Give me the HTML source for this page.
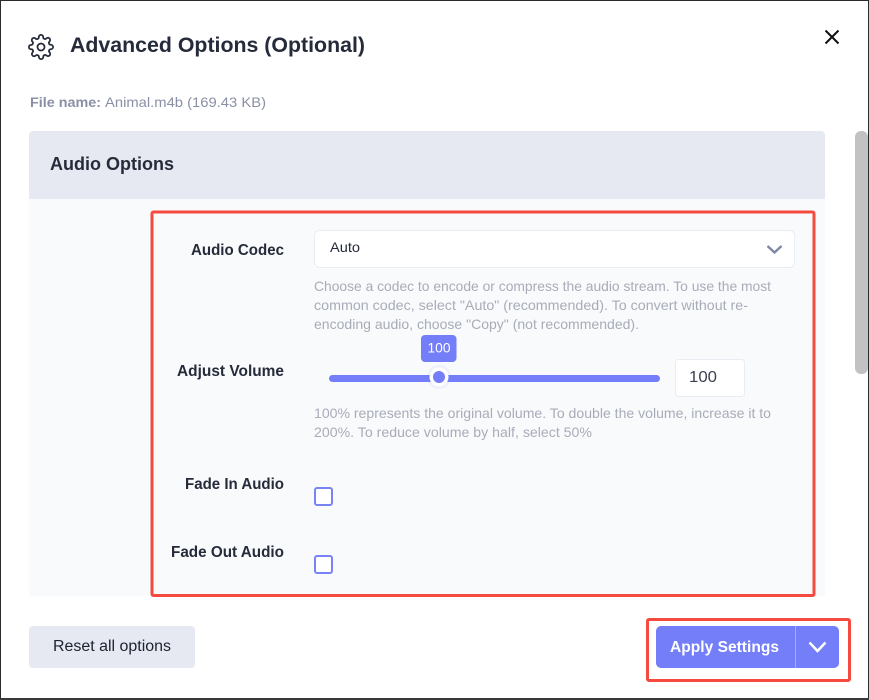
<!DOCTYPE html>
<html lang="en">
<head>
<meta charset="utf-8">
<title>Advanced Options</title>
<style>
html,body{margin:0;padding:0;width:869px;height:700px;overflow:hidden;background:#fff}
svg{display:block;position:absolute;left:0;top:0}
text{font-family:"Liberation Sans",sans-serif;white-space:pre}
.b{font-weight:700}
.lab{font-size:15.5px;font-weight:700;fill:#252b3a}
.help{font-size:14px;fill:#a8acb8}
</style>
</head>
<body>
<svg width="869" height="700" viewBox="0 0 869 700" xmlns="http://www.w3.org/2000/svg">
  <rect x="0" y="0" width="869" height="700" fill="#fff"/>
  <!-- window edges -->
  <rect x="0" y="0" width="869" height="1" fill="#2b2b2b"/>
  <rect x="0" y="0" width="1" height="700" fill="#2b2b2b"/>
  <rect x="868" y="0" width="1" height="700" fill="#2b2b2b"/>
  <rect x="0" y="698" width="869" height="2" fill="#3a3a3a"/>

  <!-- gear -->
  <g transform="translate(27.8 33.8) scale(1.1)" fill="none" stroke="#252b3a" stroke-width="1.6" stroke-linecap="round" stroke-linejoin="round">
    <circle cx="12" cy="12" r="3.2"/>
    <path d="M19.4 15a1.65 1.65 0 0 0 .33 1.82l.06.06a2 2 0 0 1 0 2.83 2 2 0 0 1-2.83 0l-.06-.06a1.65 1.65 0 0 0-1.82-.33 1.65 1.65 0 0 0-1 1.51V21a2 2 0 0 1-2 2 2 2 0 0 1-2-2v-.09A1.65 1.65 0 0 0 9 19.4a1.65 1.65 0 0 0-1.82.33l-.06.06a2 2 0 0 1-2.83 0 2 2 0 0 1 0-2.83l.06-.06a1.65 1.65 0 0 0 .33-1.82 1.65 1.65 0 0 0-1.51-1H3a2 2 0 0 1-2-2 2 2 0 0 1 2-2h.09A1.65 1.65 0 0 0 4.6 9a1.65 1.65 0 0 0-.33-1.82l-.06-.06a2 2 0 0 1 0-2.83 2 2 0 0 1 2.83 0l.06.06a1.65 1.65 0 0 0 1.82.33H9a1.65 1.65 0 0 0 1-1.51V3a2 2 0 0 1 2-2 2 2 0 0 1 2 2v.09a1.65 1.65 0 0 0 1 1.51 1.65 1.65 0 0 0 1.82-.33l.06-.06a2 2 0 0 1 2.83 0 2 2 0 0 1 0 2.83l-.06.06a1.65 1.65 0 0 0-.33 1.82V9a1.65 1.65 0 0 0 1.51 1H21a2 2 0 0 1 2 2 2 2 0 0 1-2 2h-.09a1.65 1.65 0 0 0-1.51 1z"/>
  </g>
  <text x="70" y="52" class="b" font-size="21" fill="#252b3a" textLength="295" lengthAdjust="spacingAndGlyphs">Advanced Options (Optional)</text>

  <!-- close -->
  <path d="M825.5 30.5L838.5 43.5M838.5 30.5L825.5 43.5" stroke="#111" stroke-width="2" fill="none"/>

  <text x="30" y="107" class="b" font-size="14" fill="#8a90a5" textLength="71" lengthAdjust="spacingAndGlyphs">File name:</text>
  <text x="105" y="107" font-size="14" fill="#8a90a5" textLength="161" lengthAdjust="spacingAndGlyphs">Animal.m4b (169.43 KB)</text>

  <!-- panel -->
  <rect x="29" y="199" width="796" height="397" fill="#f9fafc"/>
  <path d="M29 199V135a4 4 0 0 1 4-4H821a4 4 0 0 1 4 4V199z" fill="#e6e9f2"/>
  <text x="50" y="170" class="b" font-size="18.5" fill="#252b3a" textLength="124" lengthAdjust="spacingAndGlyphs">Audio Options</text>

  <!-- scrollbar -->
  <rect x="855" y="131" width="13" height="243" rx="6" fill="#c2c2c2"/>

  <!-- labels -->
  <text x="191" y="255" class="lab" textLength="93" lengthAdjust="spacingAndGlyphs">Audio Codec</text>
  <text x="177" y="376" class="lab" textLength="107" lengthAdjust="spacingAndGlyphs">Adjust Volume</text>
  <text x="185" y="489" class="lab" textLength="99" lengthAdjust="spacingAndGlyphs">Fade In Audio</text>
  <text x="171" y="557" class="lab" textLength="113" lengthAdjust="spacingAndGlyphs">Fade Out Audio</text>

  <!-- select -->
  <rect x="314.5" y="230.5" width="480" height="37" rx="5" fill="#fff" stroke="#e9ecf3"/>
  <text x="330" y="252" font-size="14" fill="#252b3a" textLength="30" lengthAdjust="spacingAndGlyphs">Auto</text>
  <path d="M767.5 246L774.5 252.5L781.5 246" fill="none" stroke="#7f88a3" stroke-width="2.4"/>

  <text x="314" y="291" class="help" textLength="457" lengthAdjust="spacingAndGlyphs">Choose a codec to encode or compress the audio stream. To use the most</text>
  <text x="314" y="310" class="help" textLength="434" lengthAdjust="spacingAndGlyphs">common codec, select "Auto" (recommended). To convert without re-</text>
  <text x="314" y="329" class="help" textLength="325" lengthAdjust="spacingAndGlyphs">encoding audio, choose "Copy" (not recommended).</text>

  <!-- slider -->
  <rect x="329" y="375" width="331" height="7" rx="3.5" fill="#737ef8"/>
  <circle cx="439" cy="377" r="12" fill="#737ef8" opacity="0.08"/>
  <circle cx="439" cy="377" r="9.5" fill="#fff"/>
  <circle cx="439" cy="377" r="6" fill="#737ef8"/>
  <rect x="421" y="335" width="35.5" height="27" rx="4" fill="#737ef8"/>
  <text x="427.5" y="352.5" font-size="14" fill="#fff" textLength="23" lengthAdjust="spacingAndGlyphs">100</text>

  <rect x="675.5" y="359.5" width="69" height="37" rx="3" fill="#fff" stroke="#e9ecf3"/>
  <text x="689" y="382" font-size="15.5" fill="#3a4050" textLength="28" lengthAdjust="spacingAndGlyphs">100</text>

  <text x="314" y="418" class="help" textLength="457" lengthAdjust="spacingAndGlyphs">100% represents the original volume. To double the volume, increase it to</text>
  <text x="314" y="437" class="help" textLength="278" lengthAdjust="spacingAndGlyphs">200%. To reduce volume by half, select 50%</text>

  <!-- checkboxes -->
  <rect x="315" y="488" width="17" height="17" rx="2" fill="#fff" stroke="#7a83f5" stroke-width="2"/>
  <rect x="315" y="556" width="17" height="17" rx="2" fill="#fff" stroke="#7a83f5" stroke-width="2"/>

  <!-- footer -->
  <rect x="29" y="626" width="166" height="42" rx="4" fill="#e6e9f2"/>
  <text x="53" y="651" font-size="15.5" fill="#1c2230" textLength="118" lengthAdjust="spacingAndGlyphs">Reset all options</text>

  <rect x="656" y="626" width="183" height="42" rx="5" fill="#737ef8"/>
  <rect x="795" y="626" width="1" height="42" fill="#a3abfa"/>
  <text x="670" y="652" class="b" font-size="16" fill="#fff" textLength="109" lengthAdjust="spacingAndGlyphs">Apply Settings</text>
  <path d="M809.5 642.5L817.5 651L825.5 642.5" fill="none" stroke="#fff" stroke-width="2.5"/>

  <!-- annotations -->
  <rect x="152" y="212" width="662" height="383.5" rx="1.5" fill="none" stroke="#f44a3f" stroke-width="3"/>
  <rect x="647.5" y="619.5" width="202" height="61" rx="1.5" fill="none" stroke="#f44a3f" stroke-width="3"/>
</svg>
</body>
</html>
